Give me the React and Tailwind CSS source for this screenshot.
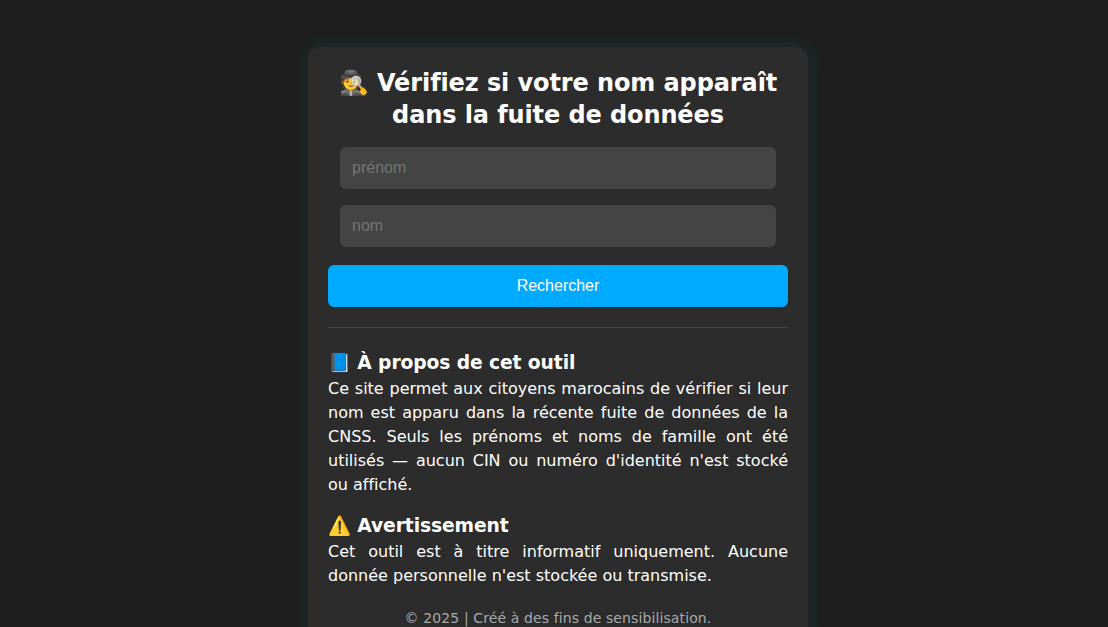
export default function App() {
  const inputCls = "block w-full h-[42px] rounded-md bg-[#444444] px-3 text-base text-white placeholder:text-[#757575] border-0 outline-none font-['Arial','Liberation_Sans',sans-serif]";
  return (
    <div className="h-[627px] overflow-hidden bg-[#1e1e1e] font-['Verdana','DejaVu_Sans',sans-serif] text-white flex flex-col items-center pl-2 [font-variant-ligatures:none]">
      <div className="mt-[47px] w-[500px] shrink-0 rounded-xl bg-[#2c2c2c] px-5 pt-5 pb-5 shadow-[0_0_20px_rgba(0,255,255,0.1)]">
        <h1 className="text-center text-2xl font-bold leading-[32px] text-white tracking-[-0.1px]">🕵️ Vérifiez si votre nom apparaît dans la fuite de données</h1>
        <div className="mt-4 px-3">
          <input className={inputCls} placeholder="prénom" />
          <input className={inputCls + " mt-4"} placeholder="nom" />
        </div>
        <button className="mt-[18px] block w-full h-[42px] rounded-md bg-[#00aaff] text-base text-white font-['Arial','Liberation_Sans',sans-serif]">Rechercher</button>
        <hr className="mt-5 border-0 border-t border-[#444444]" />
        <section className="mt-[21px]">
          <h2 className="text-[18.72px] font-bold leading-[28px] tracking-[-0.1px]">📘 À propos de cet outil</h2>
          <p className="text-base leading-[24px] text-justify">Ce site permet aux citoyens marocains de vérifier si leur nom est apparu dans la récente fuite de données de la CNSS. Seuls les prénoms et noms de famille ont été utilisés — aucun CIN ou numéro d'identité n'est stocké ou affiché.</p>
        </section>
        <section className="mt-[15px]">
          <h2 className="text-[18.72px] font-bold leading-[28px] tracking-[-0.1px]">⚠️ Avertissement</h2>
          <p className="text-base leading-[24px] text-justify">Cet outil est à titre informatif uniquement. Aucune donnée personnelle n'est stockée ou transmise.</p>
        </section>
        <p className="mt-5 text-center text-sm leading-[20px] text-[#aaaaaa] tracking-[0.11px]">© 2025 | Créé à des fins de sensibilisation.</p>
      </div>
    </div>
  );
}
